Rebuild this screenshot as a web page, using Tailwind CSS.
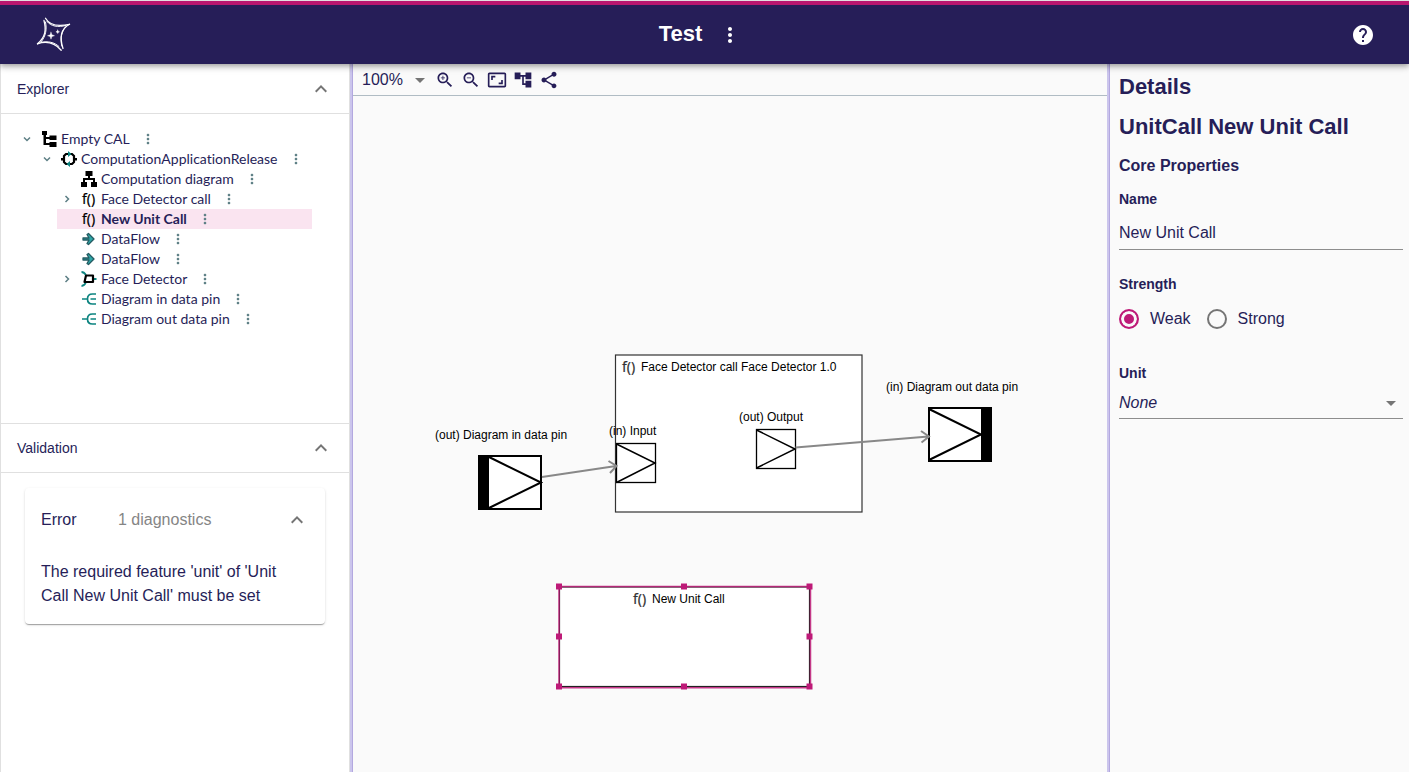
<!DOCTYPE html>
<html lang="en">
<head>
<meta charset="utf-8">
<title>Test</title>
<script src="https://cdn.jsdelivr.net/npm/@tailwindcss/browser@4"></script>
</head>
<body class="min-h-screen flex flex-col bg-[#fafafa] text-[#261e58] font-['Liberation_Sans',Arial,sans-serif]">

<svg class="hidden" aria-hidden="true">
  <symbol id="more" viewBox="0 0 24 24"><path d="M12 8c1.1 0 2-.9 2-2s-.9-2-2-2-2 .9-2 2 .9 2 2 2zm0 2c-1.1 0-2 .9-2 2s.9 2 2 2 2-.9 2-2-.9-2-2-2zm0 6c-1.1 0-2 .9-2 2s.9 2 2 2 2-.9 2-2-.9-2-2-2z"/></symbol>
  <symbol id="less" viewBox="0 0 24 24"><path d="M12 8l-6 6 1.41 1.41L12 10.83l4.59 4.58L18 14z"/></symbol>
  <symbol id="open" viewBox="0 0 12 12"><path d="M3 4.500l3 3 3-3" fill="none" stroke="#5d7f85" stroke-width="1.500"/></symbol>
  <symbol id="closed" viewBox="0 0 12 12"><path d="M4.500 3l3 3-3 3" fill="none" stroke="#5d7f85" stroke-width="1.500"/></symbol>
  <symbol id="model" viewBox="0 0 16 16"><path d="M1 0h5v4H1zM8.500 4.500h7v4.500h-7zM8.500 11h7v5h-7zM2.500 4h2.500v10H2.500zM4 6h5v2H4zM4 12h5v2H4z"/></symbol>
  <symbol id="release" viewBox="0 0 16 16"><path d="M5 3h6l2 2v6l-2 2H5l-2-2V5z" fill="#fff" stroke="#000" stroke-width="2.200"/><path d="M0 7h3v2.500H0zM13 7h3v2.500h-3z"/><path d="M7 0l3.500 3L7 6zM9 10l-3.500 3L9 16z" fill="#0d8480"/></symbol>
  <symbol id="diagram" viewBox="0 0 16 16"><path d="M4.500 0h7v5h-7zM7 5h2v3H7zM2 7h12v2H2zM2 8h2v3H2zM12 8h2v3h-2zM0 11h6v5H0zM10 11h6v5h-6z"/></symbol>
  <symbol id="call" viewBox="0 0 16 16"><text x="1" y="13" font-size="14" font-weight="400" stroke="currentColor" stroke-width=".2" font-family="Noto Sans, sans-serif">f()</text></symbol>
  <symbol id="flow" viewBox="0 0 16 16"><path d="M2 7h6L6 3.500 7.500 2.500l5.500 5.500-5.500 5.500L6 12.500 8 9H2z" fill="#2fa7a8" stroke="#245b62" stroke-width="1.300" stroke-linejoin="round"/></symbol>
  <symbol id="unit" viewBox="0 0 16 16"><path d="M.5 1C3 1 4 2.500 5 4M.5 15c3 0 3.500-1.500 4.500-4M12 8h3.500" fill="none" stroke="#0d8480" stroke-width="1.800"/><path d="M5 4.500h7v6.500H3.500z" fill="#fff" stroke="#000" stroke-width="2.200" stroke-linejoin="round"/></symbol>
  <symbol id="pin" viewBox="0 0 16 16"><path d="M1 8h5M15 3h-3.500C8 3 6.500 5 6.500 8s1.500 5 5 5H15M9.500 8H15" fill="none" stroke="#0d8480" stroke-width="1.700"/></symbol>
</svg>

<header class="relative z-10 grid grid-cols-3 items-center h-16 shrink-0 border-t border-[#e0e0e0] bg-[#261e58] text-white shadow-[0_2px_4px_-1px_rgba(0,0,0,0.2),0_4px_5px_rgba(0,0,0,0.14),0_1px_10px_rgba(0,0,0,0.12)]">
  <div class="col-span-3 self-start h-1 bg-[#b8176f]"></div>
  <a href="#" aria-label="Home" class="ml-9 mb-2 size-9">
    <svg class="size-9" viewBox="36 16 36 36" fill="none" stroke="#fff" stroke-linecap="round">
      <path d="M45.500 18.200C49 24.500 57 27 69.500 24.300" stroke-width="1.300"/>
      <path d="M47 21.500C51 26.500 58 27.500 66 25.500" stroke-width="1"/>
      <path d="M44 20.500C46.500 30 45.500 37 37.500 43.800" stroke-width="1.300"/>
      <path d="M45.500 22C47 29 46 36 41 42" stroke-width="1"/>
      <path d="M37.500 43.800C46 41 54 42 61.200 50.200" stroke-width="1.300"/>
      <path d="M41 42.300C48 41 54 42 59 46.500" stroke-width="1"/>
      <path d="M69.500 24.300C61 29 59.500 38 63 48.500" stroke-width="1.300"/>
      <path d="M66 26.500C61.500 31 60 38 61.800 46" stroke-width="1"/>
      <path d="M51 32.200l.9 2.600 2.600.9-2.600.9-.9 2.600-.9-2.600-2.600-.9 2.600-.9zM57.700 30l.6 1.200 1.200.6-1.200.6-.6 1.200-.6-1.200-1.200-.6 1.200-.6z" fill="#fff" stroke-width=".4"/>
    </svg>
  </a>
  <div class="flex items-center justify-center gap-2 mb-[6px]">
    <h1 class="text-[22px] leading-6 font-bold pb-[2px]">Test</h1>
    <button aria-label="Project actions" class="grid place-items-center size-10"><svg class="size-6 fill-current"><use href="#more"/></svg></button>
  </div>
  <button aria-label="Help" class="justify-self-end mr-[34px] mb-[6px]"><svg class="size-6 fill-current" viewBox="0 0 24 24"><path d="M12 2C6.480 2 2 6.480 2 12s4.480 10 10 10 10-4.480 10-10S17.520 2 12 2zm1 17h-2v-2h2v2zm2.070-7.750l-.9.92C13.450 12.900 13 13.500 13 15h-2v-.5c0-1.100.45-2.100 1.170-2.830l1.240-1.260c.37-.36.59-.86.59-1.410 0-1.100-.9-2-2-2s-2 .9-2 2H8c0-2.210 1.790-4 4-4s4 1.790 4 4c0 .88-.36 1.680-.93 2.250z"/></svg></button>
</header>

<div class="flex flex-1">
  <aside class="w-[350px] shrink-0 bg-white border-x border-[#e0e0e0] flex flex-col">
    <section>
      <h2><button class="flex w-full items-center justify-between h-[50px] pl-4 pr-4 border-b border-[#e0e0e0] text-sm">Explorer<svg class="size-6 fill-[#757575]"><use href="#less"/></svg></button></h2>
      <ul class="pt-[15px] pl-4 pr-[37px] h-[309px] text-sm leading-5 font-[Lato,sans-serif] [font-variant-ligatures:none]">
        <li class="flex items-center h-5">
          <button aria-label="Collapse" class="w-5 mr-1 grid place-items-center"><svg class="size-3"><use href="#open"/></svg></button>
          <svg class="size-4 mr-1"><use href="#model"/></svg>Empty CAL
          <button aria-label="More" class="ml-[10px]"><svg class="size-4 fill-[#5d7f85]"><use href="#more"/></svg></button>
        </li>
        <li class="flex items-center h-5 ml-5">
          <button aria-label="Collapse" class="w-5 mr-1 grid place-items-center"><svg class="size-3"><use href="#open"/></svg></button>
          <svg class="size-4 mr-1"><use href="#release"/></svg>ComputationApplicationRelease
          <button aria-label="More" class="ml-[10px]"><svg class="size-4 fill-[#5d7f85]"><use href="#more"/></svg></button>
        </li>
        <li class="flex items-center h-5 ml-10 pl-6">
          <svg class="size-4 mr-1"><use href="#diagram"/></svg>Computation diagram
          <button aria-label="More" class="ml-[10px]"><svg class="size-4 fill-[#5d7f85]"><use href="#more"/></svg></button>
        </li>
        <li class="flex items-center h-5 ml-10">
          <button aria-label="Expand" class="w-5 mr-1 grid place-items-center"><svg class="size-3"><use href="#closed"/></svg></button>
          <svg class="size-4 mr-1 text-black"><use href="#call"/></svg>Face Detector call
          <button aria-label="More" class="ml-[10px]"><svg class="size-4 fill-[#5d7f85]"><use href="#more"/></svg></button>
        </li>
        <li class="flex items-center h-5 ml-10 pl-6 bg-[#fae4f0] font-bold">
          <svg class="size-4 mr-1 text-black"><use href="#call"/></svg>New Unit Call
          <button aria-label="More" class="ml-[10px]"><svg class="size-4 fill-[#5d7f85]"><use href="#more"/></svg></button>
        </li>
        <li class="flex items-center h-5 ml-10 pl-6">
          <svg class="size-4 mr-1"><use href="#flow"/></svg>DataFlow
          <button aria-label="More" class="ml-[10px]"><svg class="size-4 fill-[#5d7f85]"><use href="#more"/></svg></button>
        </li>
        <li class="flex items-center h-5 ml-10 pl-6">
          <svg class="size-4 mr-1"><use href="#flow"/></svg>DataFlow
          <button aria-label="More" class="ml-[10px]"><svg class="size-4 fill-[#5d7f85]"><use href="#more"/></svg></button>
        </li>
        <li class="flex items-center h-5 ml-10">
          <button aria-label="Expand" class="w-5 mr-1 grid place-items-center"><svg class="size-3"><use href="#closed"/></svg></button>
          <svg class="size-4 mr-1"><use href="#unit"/></svg>Face Detector
          <button aria-label="More" class="ml-[10px]"><svg class="size-4 fill-[#5d7f85]"><use href="#more"/></svg></button>
        </li>
        <li class="flex items-center h-5 ml-10 pl-6">
          <svg class="size-4 mr-1"><use href="#pin"/></svg>Diagram in data pin
          <button aria-label="More" class="ml-[10px]"><svg class="size-4 fill-[#5d7f85]"><use href="#more"/></svg></button>
        </li>
        <li class="flex items-center h-5 ml-10 pl-6">
          <svg class="size-4 mr-1"><use href="#pin"/></svg>Diagram out data pin
          <button aria-label="More" class="ml-[10px]"><svg class="size-4 fill-[#5d7f85]"><use href="#more"/></svg></button>
        </li>
      </ul>
    </section>
    <section>
      <h2><button class="flex w-full items-center justify-between h-[50px] pl-4 pr-4 border-y border-[#e0e0e0] text-sm">Validation<svg class="size-6 fill-[#757575]"><use href="#less"/></svg></button></h2>
      <div class="mx-6 mt-[15px] rounded bg-white shadow-[0_2px_1px_-1px_rgba(0,0,0,0.2),0_1px_1px_rgba(0,0,0,0.14),0_1px_3px_rgba(0,0,0,0.12)]">
        <button class="flex w-full items-center h-16 px-4 text-base text-left">
          <span class="w-[77px]">Error</span><span class="text-[#858585]">1 diagnostics</span>
          <svg class="size-6 ml-auto fill-[#757575]"><use href="#less"/></svg>
        </button>
        <p class="pl-4 pr-8 pt-2 pb-4 text-base leading-6">The required feature 'unit' of 'Unit Call New Unit Call' must be set</p>
      </div>
    </section>
  </aside>

  <div class="w-[3px] shrink-0 bg-[#cbc5ec] border-r border-[#b3a8e0]"></div>

  <main class="flex-1 min-w-0 flex flex-col">
    <div class="flex items-center h-8 pl-[9px] border-b border-[#b0bcc4]">
      <div class="relative flex items-center w-[73px]">
        <select aria-label="Zoom level" class="appearance-none w-full bg-transparent text-base leading-6"><option>100%</option></select>
        <svg class="absolute right-[3px] size-6 fill-[#757575] pointer-events-none" viewBox="0 0 24 24"><path d="M7 10l5 5 5-5z"/></svg>
      </div>
      <div class="flex gap-[6px] [&_svg]:size-5 [&_svg]:fill-[#261e58]">
        <button aria-label="Zoom in"><svg viewBox="0 0 24 24"><path d="M15.500 14h-.79l-.28-.27C15.410 12.590 16 11.110 16 9.500 16 5.910 13.090 3 9.500 3S3 5.910 3 9.500 5.910 16 9.500 16c1.610 0 3.090-.59 4.230-1.570l.27.28v.79l5 4.990L20.490 19l-4.990-5zm-6 0C7.010 14 5 11.990 5 9.500S7.010 5 9.500 5 14 7.010 14 9.500 11.990 14 9.500 14zm2.500-4h-2v2H9v-2H7V9h2V7h1v2h2v1z"/></svg></button>
        <button aria-label="Zoom out"><svg viewBox="0 0 24 24"><path d="M15.500 14h-.79l-.28-.27C15.410 12.590 16 11.110 16 9.500 16 5.910 13.090 3 9.500 3S3 5.910 3 9.500 5.910 16 9.500 16c1.610 0 3.090-.59 4.230-1.570l.27.28v.79l5 4.990L20.490 19l-4.990-5zm-6 0C7.010 14 5 11.990 5 9.500S7.010 5 9.500 5 14 7.010 14 9.500 11.990 14 9.500 14zM7 9h5v1H7z"/></svg></button>
        <button aria-label="Fit to screen"><svg viewBox="0 0 24 24"><path d="M19 12h-2v3h-3v2h5v-5zM7 9h3V7H5v5h2V9zm14-6H3c-1.100 0-2 .9-2 2v14c0 1.100.9 2 2 2h18c1.100 0 2-.9 2-2V5c0-1.100-.9-2-2-2zm0 16.010H3V4.990h18v14.020z"/></svg></button>
        <button aria-label="Arrange all"><svg viewBox="0 0 24 24"><path d="M22 11V3h-7v3H9V3H2v8h7V8h2v10h4v3h7v-8h-7v3h-2V8h2v3z"/></svg></button>
        <button aria-label="Share"><svg viewBox="0 0 24 24"><path d="M18 16.080c-.76 0-1.440.3-1.960.77L8.910 12.700c.05-.23.09-.46.09-.7s-.04-.47-.09-.7l7.050-4.110c.54.5 1.250.81 2.040.81 1.660 0 3-1.340 3-3s-1.340-3-3-3-3 1.340-3 3c0 .24.04.47.09.7L8.040 9.810C7.500 9.310 6.790 9 6 9c-1.660 0-3 1.340-3 3s1.340 3 3 3c.79 0 1.500-.31 2.040-.81l7.120 4.160c-.05.21-.08.43-.08.65 0 1.610 1.310 2.920 2.920 2.920 1.610 0 2.920-1.310 2.920-2.920s-1.310-2.920-2.920-2.920z"/></svg></button>
      </div>
    </div>
    <div class="relative flex-1">
      <svg class="absolute inset-0 w-full h-full" font-size="12" fill="#000">
        <g transform="translate(-353 -96)">
          <rect x="615.500" y="355" width="246.500" height="157" fill="#fff" stroke="#333" stroke-width="1.200"/>
          <use href="#call" x="621" y="359" width="16" height="16" fill="#333" color="#333"/>
          <text x="641" y="371">Face Detector call Face Detector 1.0</text>

          <text x="435" y="439">(out) Diagram in data pin</text>
          <rect x="479" y="456" width="62" height="53" fill="#fff" stroke="#000" stroke-width="2"/>
          <rect x="478" y="455" width="11" height="55"/>
          <path d="M489 457l52 25.500L489 508" fill="none" stroke="#000" stroke-width="2"/>

          <text x="609" y="435">(in) Input</text>
          <rect x="616.500" y="443.500" width="39" height="39" fill="#fff" stroke="#000" stroke-width="1.300"/>
          <path d="M616.500 444l38.500 19-38.500 19.500" fill="none" stroke="#000" stroke-width="1.500"/>

          <text x="739" y="421">(out) Output</text>
          <rect x="756.500" y="429.500" width="39" height="39" fill="#fff" stroke="#000" stroke-width="1.300"/>
          <path d="M756.500 430l38.500 19-38.500 19" fill="none" stroke="#000" stroke-width="1.500"/>

          <text x="886" y="391">(in) Diagram out data pin</text>
          <rect x="929" y="408" width="62" height="53" fill="#fff" stroke="#000" stroke-width="2"/>
          <rect x="981" y="407" width="11" height="55"/>
          <path d="M929 409l52 25.500L929 460" fill="none" stroke="#000" stroke-width="2"/>

          <g fill="none" stroke="#888" stroke-width="2">
            <path d="M542 477l74-11M608.500 461l8 5-6.500 7"/>
            <path d="M795.500 447.500l133-11M921 431l8 5.500-7.500 6"/>
          </g>

          <rect x="559.500" y="587" width="250" height="99.500" fill="#fff" stroke="#222" stroke-width="1.200"/>
          <path d="M559 687.500V586.500H810.500V687.800H559" fill="none" stroke="#be1a78" stroke-width="1.500" stroke-opacity=".85"/>
          <g fill="#be1a78">
            <rect x="556" y="583.500" width="6" height="6"/><rect x="681" y="583.500" width="6" height="6"/><rect x="806.500" y="583.500" width="6" height="6"/>
            <rect x="556" y="633.500" width="6" height="6"/><rect x="806.500" y="633.500" width="6" height="6"/>
            <rect x="556" y="683.500" width="6" height="6"/><rect x="681" y="683.500" width="6" height="6"/><rect x="806.500" y="683.500" width="6" height="6"/>
          </g>
          <use href="#call" x="632" y="591" width="16" height="16" fill="#333" color="#333"/>
          <text x="652" y="603">New Unit Call</text>
        </g>
      </svg>
    </div>
  </main>

  <div class="w-[3px] shrink-0 bg-[#cbc5ec] border-r border-[#b3a8e0]"></div>

  <aside class="w-[299px] shrink-0 pl-[9px] pr-[6px] pt-[7px]">
    <h2 class="text-[22px] leading-8 font-bold">Details</h2>
    <h3 class="mt-2 text-[22px] leading-8 font-bold">UnitCall New Unit Call</h3>
    <h4 class="mt-[11px] text-base leading-6 font-bold">Core Properties</h4>
    <label for="name" class="block mt-[11px] text-sm leading-5 font-bold">Name</label>
    <input id="name" type="text" value="New Unit Call" class="block w-full mt-2 h-[33px] pb-[1px] bg-transparent border-b border-[#8d8d8d] text-base outline-none">
    <fieldset>
      <legend class="pt-6 text-sm leading-5 font-bold">Strength</legend>
      <div class="flex items-center gap-4 mt-[13px] text-base leading-6">
        <label class="flex items-center gap-[11px]"><input type="radio" name="strength" checked class="appearance-none size-5 rounded-full border-2 border-[#757575] checked:border-[#be1a78] checked:bg-[#be1a78] checked:shadow-[inset_0_0_0_3px_#fafafa]">Weak</label>
        <label class="flex items-center gap-[11px]"><input type="radio" name="strength" class="appearance-none size-5 rounded-full border-2 border-[#757575] checked:border-[#be1a78] checked:bg-[#be1a78] checked:shadow-[inset_0_0_0_3px_#fafafa]">Strong</label>
      </div>
    </fieldset>
    <label for="unit-select" class="block mt-8 text-sm leading-5 font-bold">Unit</label>
    <div class="relative flex items-center border-b border-[#8d8d8d] h-9 pt-1">
      <select id="unit-select" class="appearance-none w-full bg-transparent text-base leading-6 italic"><option>None</option></select>
      <svg class="absolute right-0 size-6 fill-[#757575] pointer-events-none" viewBox="0 0 24 24"><path d="M7 10l5 5 5-5z"/></svg>
    </div>
  </aside>
</div>
</body>
</html>
